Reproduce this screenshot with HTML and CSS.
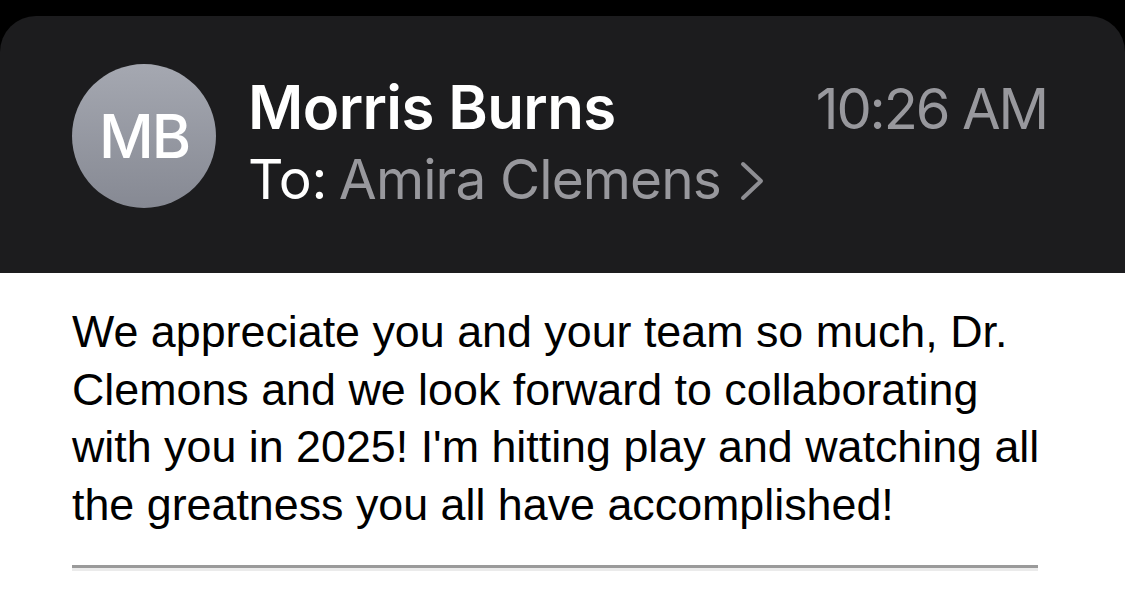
FILE: index.html
```html
<!DOCTYPE html>
<html>
<head>
<meta charset="utf-8">
<link rel="stylesheet" href="styles.css">
</head>
<body>
<div class="screen">
  <header class="card">
    <div class="avatar">MB</div>
    <div class="meta">
      <div class="row">
        <span class="name">Morris Burns</span>
        <span class="time">10:26 AM</span>
      </div>
      <div class="to">
        <span class="to-label">To:</span>
        <span class="to-name">Amira Clemens</span>
        <svg class="chev" width="24" height="40" viewBox="0 0 24 40"><path d="M3 3 L21 20 L3 37" fill="none" stroke="#8e8e93" stroke-width="4" stroke-linecap="round" stroke-linejoin="round"/></svg>
      </div>
    </div>
  </header>
  <main class="body">
    <p class="msg">We appreciate you and your team so much, Dr.<br>Clemons and we look forward to collaborating<br>with you in 2025! I'm hitting play and watching all<br>the greatness you all have accomplished!</p>
    <div class="rule"></div>
  </main>
</div>
</body>
</html>
```
FILE: styles.css
```css
html, body {
  margin: 0;
  padding: 0;
  background: #ffffff;
}
.screen {
  width: 1125px;
  height: 609px;
  background: #000;
  padding-top: 16px;
  box-sizing: border-box;
  display: flex;
  flex-direction: column;
  overflow: hidden;
}
.card {
  background: #1c1c1e;
  border-radius: 36px 36px 0 0;
  height: 257px;
  box-sizing: border-box;
  padding: 48px 78px 0 72px;
  display: flex;
  gap: 32px;
  font-family: Inter, "Noto Sans", sans-serif;
}
.avatar {
  width: 144px;
  height: 144px;
  border-radius: 50%;
  flex: none;
  background: linear-gradient(180deg, #a5a8b1 0%, #868993 100%);
  color: #fff;
  font-size: 60px;
  font-weight: 500;
  display: flex;
  align-items: center;
  justify-content: center;
  letter-spacing: -2px;
}
.meta {
  flex: 1;
  display: flex;
  flex-direction: column;
  padding-top: 7px;
}
.row {
  display: flex;
  justify-content: space-between;
  align-items: baseline;
  height: 72px;
}
.name {
  color: #fff;
  font-size: 60px;
  font-weight: 600;
  line-height: 72px;
  letter-spacing: -0.6px;
}
.time {
  color: #98989d;
  font-size: 56px;
  font-weight: 400;
  letter-spacing: -2.1px;
}
.to {
  display: flex;
  align-items: center;
  gap: 14px;
  font-size: 55px;
  line-height: 70px;
  letter-spacing: -0.4px;
  margin-top: 1px;
}
.to-label { color: #fff; }
.to-name { color: #98989d; margin-left: -2px; letter-spacing: -0.9px; }
.chev { margin-left: 5px; margin-top: 4px; }
.body {
  flex: 1;
  background: #fff;
  padding: 30px 72px 0 72px;
}
.msg {
  margin: 0;
  font-family: "Liberation Sans", Arial, sans-serif;
  font-size: 44.8px;
  line-height: 57.7px;
  color: #000;
  white-space: nowrap;
}
.rule {
  margin-top: 31px;
  width: 966px;
  height: 3px;
  background: #9a9a9a;
  border-bottom: 3px solid #ebebeb;
}
```
